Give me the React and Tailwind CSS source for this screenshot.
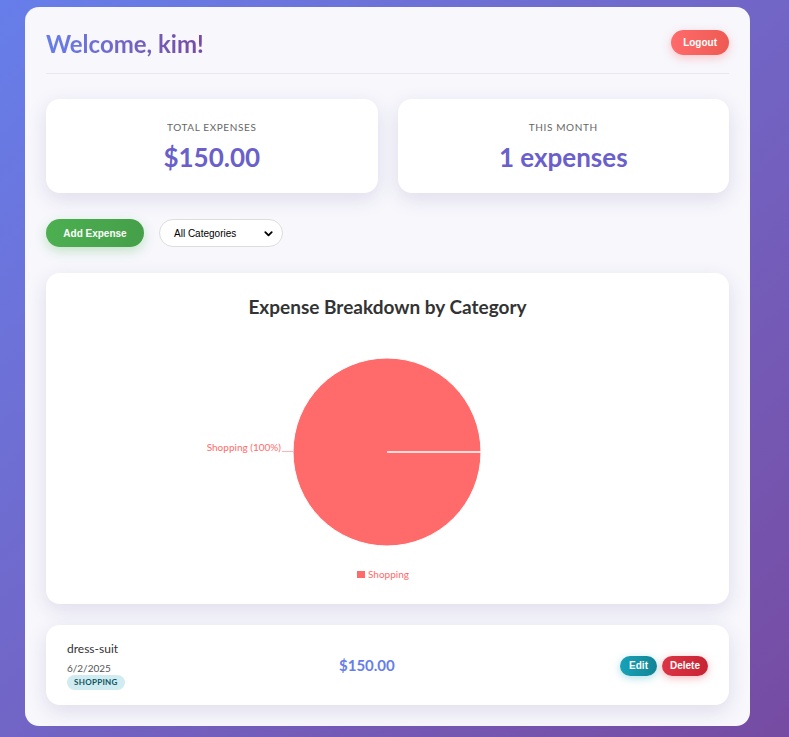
const expenses = [
  { id: 1, title: "dress-suit", date: "6/2/2025", category: "shopping", amount: 150 },
];

const StatCard = ({ label, value }) => (
  <div className="flex-1 rounded-[14px] bg-white px-5 pt-[21px] pb-[20px] text-center shadow-[0_6px_20px_rgba(60,50,120,0.13)]">
    <p className="text-[10px] leading-[14px] uppercase tracking-[0.6px] text-[#666]">{label}</p>
    <p className="mt-[7px] text-[26px] leading-[32px] font-bold text-[#6a5fcb]">{value}</p>
  </div>
);

const PieChart = () => (
  <svg width="643" height="255" className="block">
    <circle cx="321" cy="119" r="94" fill="#ff6b6b" stroke="#fff" strokeWidth="1" />
    <line x1="321" y1="119" x2="415" y2="119" stroke="#fff" strokeWidth="1.5" />
    <line x1="216" y1="118.5" x2="227" y2="118.5" stroke="#ffb3b3" strokeWidth="1" />
    <text x="215" y="118" textAnchor="end" fontSize="10" fill="#ff6b6b" fontFamily="Lato, sans-serif">
      Shopping (100%)
    </text>
    <rect x="291" y="238" width="8" height="7" fill="#ff6b6b" />
    <text x="302" y="245" fontSize="10" fill="#ff6b6b" fontFamily="Lato, sans-serif">
      Shopping
    </text>
  </svg>
);

const ExpenseItem = ({ expense }) => (
  <div className="flex items-center rounded-[14px] bg-white px-[21px] pt-[16px] pb-[15px] shadow-[0_6px_20px_rgba(60,50,120,0.13)]">
    <div className="w-[272px]">
      <p className="text-[12px] leading-[16px] text-[#333]">{expense.title}</p>
      <p className="mt-[5px] text-[10px] leading-[12px] text-[#555]">{expense.date}</p>
      <span className="mt-[1px] block w-fit rounded-full bg-[#d1ecf1] px-[7px] py-[2px] text-[8px] leading-[11px] font-bold uppercase tracking-[0.3px] text-[#0c5460]">
        {expense.category}
      </span>
    </div>
    <p className="text-[15px] font-bold text-[#667eea]">
      ${expense.amount.toFixed(2)}
    </p>
    <div className="ml-auto flex gap-[5px] font-['Liberation_Sans',sans-serif]">
      <button className="h-[20px] rounded-full bg-gradient-to-r from-[#17a2b8] to-[#138496] px-[9px] text-[10px] font-bold text-white shadow-[0_2px_8px_rgba(23,162,184,0.35)]">
        Edit
      </button>
      <button className="h-[20px] rounded-full bg-gradient-to-r from-[#dc3545] to-[#c82333] px-[8px] text-[10px] font-bold text-white shadow-[0_2px_8px_rgba(220,53,69,0.35)]">
        Delete
      </button>
    </div>
  </div>
);

export default function App() {
  return (
    <div className="min-h-[737px] bg-gradient-to-br from-[#667eea] to-[#764ba2] pt-[7px] pb-[12px] pl-[25px] font-['Lato',sans-serif]">
      <div className="w-[725px] rounded-[14px] bg-[#f7f7fc] px-[21px] pt-[21px] pb-[21px]">
        <header className="flex items-start justify-between border-b border-[#e8e8f0] pb-[13px]">
          <h1 className="bg-gradient-to-r from-[#667eea] to-[#764ba2] bg-clip-text text-[24px] leading-[32px] font-bold text-transparent">
            Welcome, kim!
          </h1>
          <button className="mt-[2px] h-[25px] rounded-full bg-gradient-to-r from-[#ff6b6b] to-[#ee5a52] px-[12px] font-['Liberation_Sans',sans-serif] text-[10px] font-bold text-white shadow-[0_3px_10px_rgba(255,107,107,0.35)]">
            Logout
          </button>
        </header>

        <div className="mt-[25px] flex gap-[20px]">
          <StatCard label="Total Expenses" value="$150.00" />
          <StatCard label="This Month" value="1 expenses" />
        </div>

        <div className="mt-[26px] flex items-center gap-[15px]">
          <button className="h-[28px] w-[98px] rounded-full bg-gradient-to-r from-[#4caf50] to-[#45a049] font-['Liberation_Sans',sans-serif] text-[10px] font-bold text-white shadow-[0_4px_12px_rgba(76,175,80,0.3)]">
            Add Expense
          </button>
          <div className="flex h-[28px] w-[124px] items-center justify-between rounded-full border border-[#ddd] bg-white pl-[14px] pr-[8px] font-['Liberation_Sans',sans-serif] text-[10px] text-black">
            <span>All Categories</span>
            <svg width="11" height="11" viewBox="0 0 24 24" fill="none" stroke="#000" strokeWidth="4" strokeLinecap="round" strokeLinejoin="round">
              <path d="M5 9l7 7 7-7" />
            </svg>
          </div>
        </div>

        <div className="mt-[26px] rounded-[14px] bg-white px-[20px] pt-[23px] pb-[16px] shadow-[0_6px_20px_rgba(60,50,120,0.13)]">
          <h2 className="text-center text-[19px] leading-[22px] font-bold text-[#333]">
            Expense Breakdown by Category
          </h2>
          <div className="mt-[15px]">
            <PieChart />
          </div>
        </div>

        <div className="mt-[21px] flex flex-col gap-[15px]">
          {expenses.map((expense) => (
            <ExpenseItem key={expense.id} expense={expense} />
          ))}
        </div>
      </div>
    </div>
  );
}
